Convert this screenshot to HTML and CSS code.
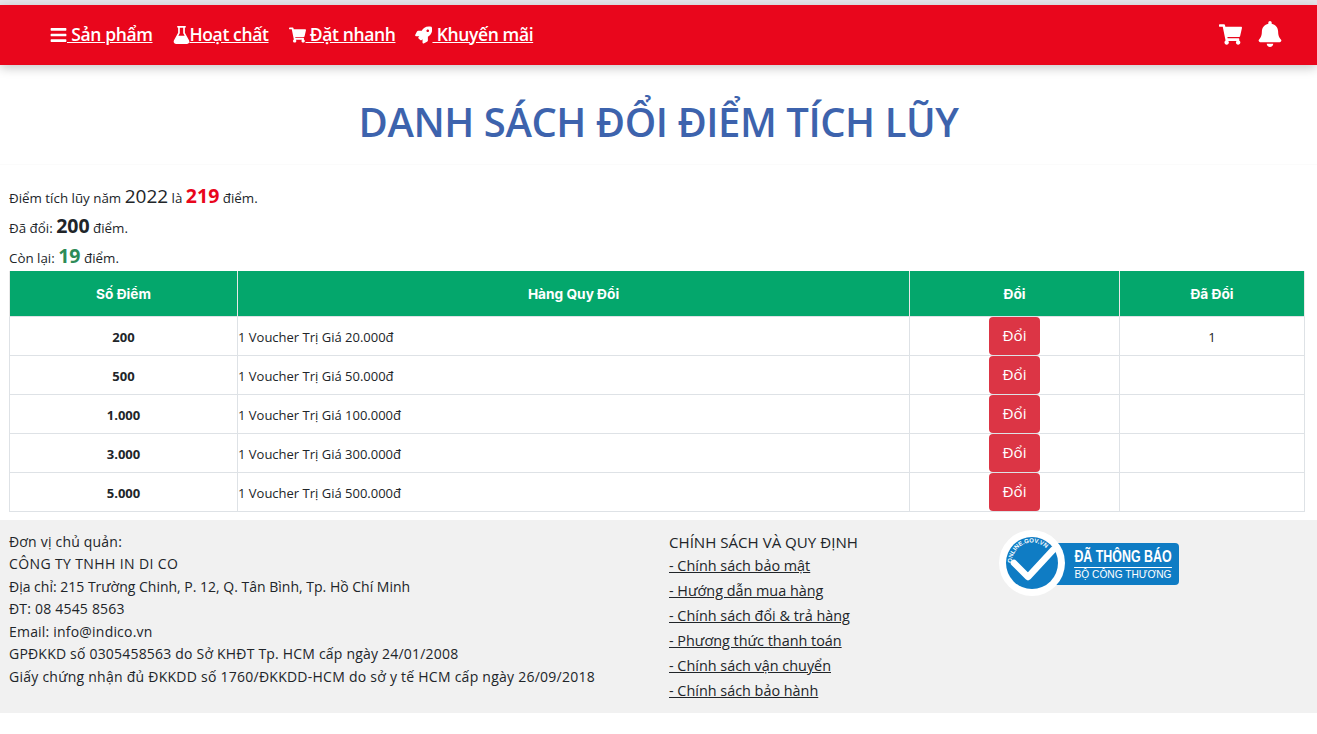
FILE: index.html
```html
<!DOCTYPE html>
<html lang="vi">
<head>
<meta charset="utf-8">
<title>Danh sách đổi điểm tích lũy</title>
<link rel="stylesheet" href="styles.css">
</head>
<body>
<header class="topbar">
  <nav class="nav-links">
    <a href="#"><svg class="ico" viewBox="0 0 448 512"><path d="M16 132h416c9 0 16-7 16-16V76c0-9-7-16-16-16H16C7 60 0 67 0 76v40c0 9 7 16 16 16zm0 160h416c9 0 16-7 16-16v-40c0-9-7-16-16-16H16c-9 0-16 7-16 16v40c0 9 7 16 16 16zm0 160h416c9 0 16-7 16-16v-40c0-9-7-16-16-16H16c-9 0-16 7-16 16v40c0 9 7 16 16 16z"/></svg> Sản phẩm</a>
    <a href="#"><svg class="ico" viewBox="0 0 448 512"><path d="M437 403 320 192V48h8c13 0 24-11 24-24S341 0 328 0H120c-13 0-24 11-24 24s11 24 24 24h8v144L11 403c-29 52 9 109 62 109h302c53 0 91-57 62-109zM176 48h96v157l42 75H134l42-75z"/></svg>Hoạt chất</a>
    <a href="#"><svg class="ico" viewBox="0 0 576 512"><path d="M528 301l47-208c3-15-8-29-23-29H159l-9-47C148 7 138 0 127 0H24C11 0 0 11 0 24v16c0 13 11 24 24 24h70l70 344c-17 10-28 28-28 48 0 31 25 56 56 56s56-25 56-56c0-16-6-30-17-40h209c-11 10-17 24-17 40 0 31 25 56 56 56s56-25 56-56c0-22-13-41-32-50l5-24c3-15-8-29-23-29H217l-7-32h295c11 0 21-8 23-19z"/></svg> Đặt nhanh</a>
    <a href="#"><svg class="ico" viewBox="0 0 512 512"><path d="M505 19c-1-5-6-10-11-11C462 1 437 0 412 0 309 0 248 55 202 128H98c-16 0-35 12-43 27L5 255c-2 3-3 7-3 11 0 13 11 24 24 24h105l-23 23c-11 11-13 32 0 45l50 50c11 11 31 14 45 0l23-23v105c0 13 11 24 24 24 4 0 8-1 11-3l100-50c15-7 27-26 27-43V309c73-46 128-108 128-210 0-26 0-51-11-80zM384 168c-22 0-40-18-40-40s18-40 40-40 40 18 40 40-18 40-40 40z"/></svg> Khuyến mãi</a>
  </nav>
  <div class="nav-icons">
    <svg class="ico-lg cart" viewBox="0 0 576 512"><path d="M528 301l47-208c3-15-8-29-23-29H159l-9-47C148 7 138 0 127 0H24C11 0 0 11 0 24v16c0 13 11 24 24 24h70l70 344c-17 10-28 28-28 48 0 31 25 56 56 56s56-25 56-56c0-16-6-30-17-40h209c-11 10-17 24-17 40 0 31 25 56 56 56s56-25 56-56c0-22-13-41-32-50l5-24c3-15-8-29-23-29H217l-7-32h295c11 0 21-8 23-19z"/></svg>
    <svg class="ico-lg bell" viewBox="0 0 448 512"><path d="M224 512c35 0 64-29 64-64H160c0 35 29 64 64 64zm215-150c-19-21-55-52-55-154 0-78-54-140-127-155V32c0-18-15-32-33-32s-33 14-33 32v21C118 68 64 130 64 208c0 102-36 133-55 154-6 6-9 14-9 22 0 16 13 32 32 32h384c19 0 32-16 32-32 0-8-3-16-9-22z"/></svg>
  </div>
</header>

<main>
  <h1 class="title">DANH SÁCH ĐỔI ĐIỂM TÍCH LŨY</h1>
  <section class="summary">
    <p>Điểm tích lũy năm <span class="year">2022</span> là <b class="num red">219</b> điểm.</p>
    <p>Đã đổi: <b class="num">200</b> điểm.</p>
    <p>Còn lại: <b class="num green">19</b> điểm.</p>
  </section>
  <table class="points">
    <colgroup><col class="c1"><col class="c2"><col class="c3"><col class="c4"></colgroup>
    <thead>
      <tr><th>Số Điểm</th><th>Hàng Quy Đổi</th><th>Đổi</th><th>Đã Đổi</th></tr>
    </thead>
    <tbody>
      <tr><td class="pts">200</td><td>1 Voucher Trị Giá 20.000đ</td><td class="mid"><button class="btn">Đổi</button></td><td class="mid">1</td></tr>
      <tr><td class="pts">500</td><td>1 Voucher Trị Giá 50.000đ</td><td class="mid"><button class="btn">Đổi</button></td><td class="mid"></td></tr>
      <tr><td class="pts">1.000</td><td>1 Voucher Trị Giá 100.000đ</td><td class="mid"><button class="btn">Đổi</button></td><td class="mid"></td></tr>
      <tr><td class="pts">3.000</td><td>1 Voucher Trị Giá 300.000đ</td><td class="mid"><button class="btn">Đổi</button></td><td class="mid"></td></tr>
      <tr><td class="pts">5.000</td><td>1 Voucher Trị Giá 500.000đ</td><td class="mid"><button class="btn">Đổi</button></td><td class="mid"></td></tr>
    </tbody>
  </table>
</main>

<footer class="footer">
  <div class="f-company">
    <div>Đơn vị chủ quản:</div>
    <div class="wide">CÔNG TY TNHH IN DI CO</div>
    <div class="tight">Địa chỉ: 215 Trường Chinh, P. 12, Q. Tân Bình, Tp. Hồ Chí Minh</div>
    <div>ĐT: 08 4545 8563</div>
    <div>Email: info@indico.vn</div>
    <div>GPĐKKD số 0305458563 do Sở KHĐT Tp. HCM cấp ngày 24/01/2008</div>
    <div class="wider">Giấy chứng nhận đủ ĐKKDD số 1760/ĐKKDD-HCM do sở y tế HCM cấp ngày 26/09/2018</div>
  </div>
  <div class="f-policy">
    <div class="f-head">CHÍNH SÁCH VÀ QUY ĐỊNH</div>
    <a href="#">- Chính sách bảo mật</a>
    <a href="#">- Hướng dẫn mua hàng</a>
    <a href="#">- Chính sách đổi &amp; trả hàng</a>
    <a href="#">- Phương thức thanh toán</a>
    <a href="#">- Chính sách vận chuyển</a>
    <a href="#">- Chính sách bảo hành</a>
  </div>
  <div class="f-badge">
    <div class="badge-plate">
      <span class="badge-top">ĐÃ THÔNG BÁO</span>
      <span class="badge-bottom">BỘ CÔNG THƯƠNG</span>
    </div>
    <svg class="badge-seal" viewBox="0 0 66 66">
      <circle cx="33" cy="33" r="33" fill="#fff"/>
      <circle cx="33" cy="33" r="26" fill="#0f7cc4"/>
      <path d="M15 33 l14 14 L54 20" fill="none" stroke="#fff" stroke-width="6.5" stroke-linecap="round" stroke-linejoin="round"/>
      <path id="seal-arc" d="M13 33 A20 20 0 0 1 50 22" fill="none"/>
      <text class="seal-text"><textPath href="#seal-arc">ONLINE.GOV.VN</textPath></text>
    </svg>
  </div>
</footer>
</body>
</html>
```
FILE: styles.css
```css
* { box-sizing: border-box; }
html, body { margin: 0; padding: 0; }
body {
  background: #fff;
  color: #212529;
  font-family: "Open Sans", "Noto Sans", sans-serif;
  font-size: 14px;
  padding-top: 5px;
  background-image: linear-gradient(#e6e6ea, #e6e6ea);
  background-size: 100% 5px;
  background-repeat: no-repeat;
}
.topbar {
  height: 60px;
  background: #e9061c;
  box-shadow: 0 3px 10px rgba(0,0,0,.22);
  display: flex;
  align-items: center;
  justify-content: space-between;
  padding: 0 35px 2px 50px;
}
.nav-links { display: flex; gap: 20px; }
.nav-links a {
  color: #fff;
  font-size: 17.5px;
  font-weight: 600;
  text-decoration: underline;
  letter-spacing: -.37px;
}
.ico { width: 17px; height: 18px; fill: #fff; vertical-align: -3px; }
.nav-icons { display: flex; align-items: center; gap: 16px; }
.ico-lg { fill: #fff; display: block; }
.cart { width: 23px; height: 21px; }
.bell { width: 24px; height: 26px; }
.title {
  margin: 0;
  padding: 32px 0 18px;
  height: 100px;
  text-align: center;
  color: #3d63ad;
  font-size: 40px;
  font-weight: 600;
  line-height: 50px;
  letter-spacing: -.45px;
  border-bottom: 1px solid #fbfbfb;
}
.summary { padding: 18px 9px 0; }
.summary p { margin: 0; height: 30px; line-height: 25px; font-size: 13.35px; }
.summary p:last-child { height: 28px; }
.year { font-size: 19px; }
.num { font-size: 19.5px; font-weight: 700; }
.red { color: #e9061c; }
.green { color: #2e8b57; }
.points {
  width: 1295px;
  margin-left: 9px;
  border-collapse: collapse;
  table-layout: fixed;
  font-size: 13px;
}
.c1 { width: 228px; }
.c2 { width: 672px; }
.c3 { width: 210px; }
.c4 { width: 185px; }
.points th {
  height: 45px;
  background: #04a76c;
  color: #fff;
  font-family: "Inter", sans-serif;
  font-size: 13.7px;
  font-weight: 700;
  border: 1px solid #e8e8e8;
  border-width: 0 1px;
  padding: 2px 0 0;
}
.points td {
  height: 39px;
  border: 1px solid #dee2e6;
  padding: 3px 0 0;
}
.points td.mid:has(.btn) { padding: 0; }
.pts { text-align: center; font-weight: 700; }
.mid { text-align: center; }
.btn {
  display: block;
  margin: 0 auto;
  width: 51px;
  height: 38px;
  border: 0;
  border-radius: 4px;
  background: #dc3545;
  color: #fff;
  font-family: inherit;
  font-size: 15.3px;
  padding: 0 0 2px;
}
.footer {
  margin-top: 8px;
  height: 193px;
  background: #f1f1f1;
  display: flex;
  padding: 11px 9px 0;
  font-size: 14px;
  line-height: 22.55px;
}
.f-company { width: 660px; flex: none; letter-spacing: .2px; }
.f-company .wide { letter-spacing: .38px; }
.f-company .tight { letter-spacing: 0; }
.f-company .wider { letter-spacing: .25px; }
.f-policy { width: 330px; flex: none; }
.f-policy .f-head { font-size: 15.1px; margin-bottom: -.5px; }
.f-policy a { display: block; color: #212529; line-height: 25px; font-size: 14.4px; }
.f-badge { position: relative; width: 180px; height: 66px; margin-top: -1px; flex: none; }
.badge-seal { position: absolute; left: 0; top: 0; width: 66px; height: 66px; }
.badge-plate {
  position: absolute;
  left: 30px; top: 13px;
  width: 150px; height: 42px;
  background: #0f7cc4;
  border-radius: 4px;
  color: #fff;
  display: flex;
  flex-direction: column;
  align-items: center;
  padding-left: 38px;
  line-height: 1;
}
.badge-top { font-family: "Liberation Sans", sans-serif; font-weight: 700; font-size: 17px; margin-top: 5px; width: 134px; flex: none; text-align: center; padding-bottom: 2px; border-bottom: 1px solid #fff; transform: scaleX(.73); white-space: nowrap; }
.badge-bottom { font-family: "Liberation Sans", sans-serif; font-size: 10.2px; margin-top: 2px; white-space: nowrap; }
.seal-text { font-family: "Liberation Sans", sans-serif; font-size: 6px; font-weight: 700; fill: #fff; }
```
